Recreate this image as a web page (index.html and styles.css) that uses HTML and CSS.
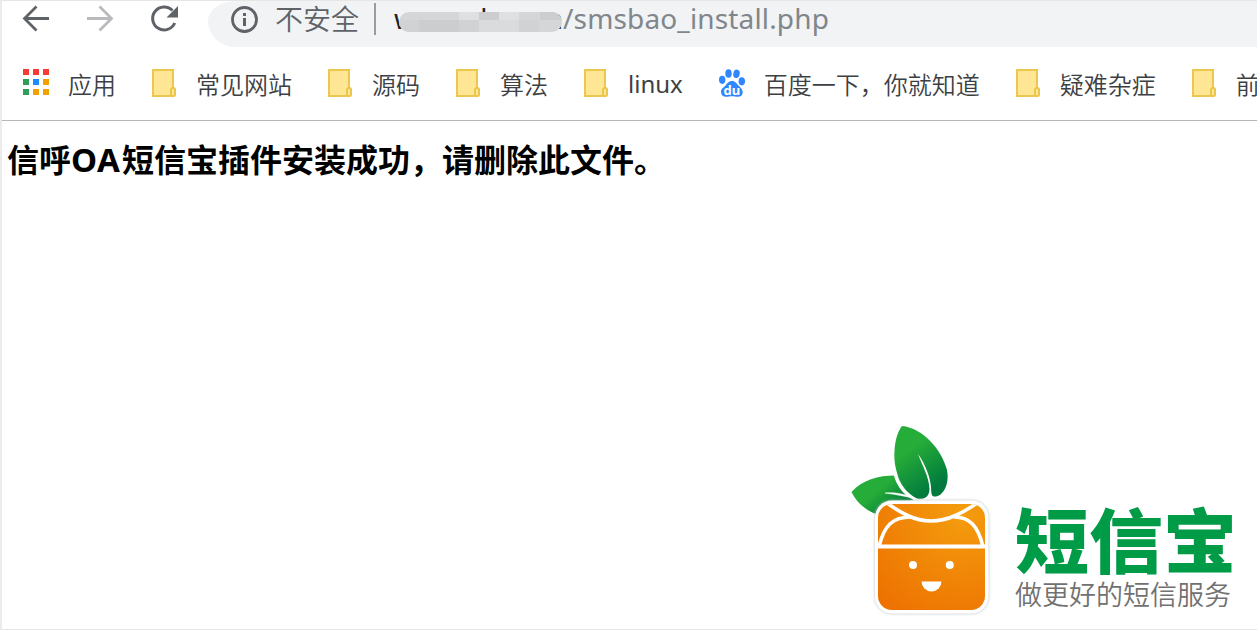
FILE: index.html
```
<!DOCTYPE html>
<html lang="zh-CN">
  <head>
    <meta charset="UTF-8" />
    <title>短信宝插件安装</title>
    <link rel="stylesheet" href="styles.css">
  </head>
  <body>
    <svg class="defs" width="0" height="0">
      <symbol id="folder" viewBox="0 0 24 28">
        <path d="M1 1h20v26H1z" fill="#ffe694" stroke="#ebc84b" stroke-width="2" />
        <rect x="19" y="19" width="4" height="8" rx="1.5" fill="#ffe694" stroke="#ebc84b" stroke-width="2" />
      </symbol>
    </svg>

    <div class="toolbar">
      <svg class="nav-icon" width="28" height="28" viewBox="0 0 28 28" fill="none" stroke="#5f6368" stroke-width="2.8">
        <path d="M27 13.5H3M14.5 1.5l-12 12 12 12" />
      </svg>
      <svg class="nav-icon" width="28" height="28" viewBox="0 0 28 28" fill="none" stroke="#bababc" stroke-width="2.8">
        <path d="M1 13.5h24M13.5 1.5l12 12-12 12" />
      </svg>
      <svg class="nav-icon" width="28" height="28" viewBox="0 0 28 28">
        <path d="M22.5 5.5A11.5 11.5 0 1 0 24.7 18" fill="none" stroke="#5f6368" stroke-width="3" />
        <path d="M28 1v11.5H16.5z" fill="#5f6368" />
      </svg>
      <div class="address">
        <svg class="info" width="28" height="28" viewBox="0 0 28 28">
          <circle cx="14.5" cy="14.5" r="12" fill="none" stroke="#5f6368" stroke-width="2.8" />
          <path d="M13 8h3v3h-3zM13 13h3v8h-3z" fill="#5f6368" />
        </svg>
        <span class="insecure">不安全</span>
        <span class="divider"></span>
        <div class="host">
          <span>w</span><span class="mid">l</span><span>n</span>
          <svg class="mosaic" width="163" height="20" viewBox="0 0 163 20">
            <path fill="#d5d6d8" d="M0 0h163v20H0z" />
            <path fill="#dfe0e1" d="M60 0h20v8H60zM100 0h20v8h-20z" />
            <path fill="#cccdcf" d="M80 0h20v8H80zM141 0h22v8h-22zM20 8h20v12H20zM40 8h20v12H40z" />
            <path fill="#d1d2d4" d="M0 8h20v12H0zM60 8h20v12H60zM120 8h20v12h-20z" />
            <path fill="#dadbdc" d="M100 8h20v12h-20zM80 8h20v12H80z" />
          </svg>
        </div>
        <span class="path">/smsbao_install.php</span>
      </div>
    </div>

    <div class="bookmarks">
      <div class="bookmark apps">
        <svg width="26" height="26" viewBox="0 0 26 26">
          <path fill="#f93a37" d="M0 0h6v6H0zM10 0h6v6h-6zM20 0h6v6h-6z" />
          <path fill="#2f9e58" d="M0 10h6v6H0zM0 20h6v6H0z" />
          <path fill="#1a8cff" d="M10 10h6v6h-6z" />
          <path fill="#f2a200" d="M20 10h6v6h-6zM10 20h6v6h-6zM20 20h6v6h-6z" />
        </svg>
        <span>应用</span>
      </div>
      <div class="bookmark"><svg width="24" height="28"><use href="#folder" /></svg><span>常见网站</span></div>
      <div class="bookmark"><svg width="24" height="28"><use href="#folder" /></svg><span>源码</span></div>
      <div class="bookmark"><svg width="24" height="28"><use href="#folder" /></svg><span>算法</span></div>
      <div class="bookmark"><svg width="24" height="28"><use href="#folder" /></svg><span class="latin">linux</span></div>
      <div class="bookmark baidu">
        <svg width="26" height="28" viewBox="0 0 26 28">
          <g fill="#2f86ff">
            <ellipse cx="3.2" cy="10.8" rx="3.2" ry="4.1" />
            <ellipse cx="9.5" cy="4.5" rx="3.2" ry="4.3" />
            <ellipse cx="17.5" cy="4.8" rx="3.2" ry="4.2" transform="rotate(12 17.5 4.8)" />
            <ellipse cx="22.8" cy="12.3" rx="3.2" ry="4.1" />
            <path d="M13 12c3.5 0 4.5 2.5 6.5 4.6 2.2 2.3 4.2 3.8 4.2 6.7 0 3-2 4.5-4.7 4.5-2.5 0-3.7-.5-6-.5s-3.5.5-6 .5c-3 0-5-1.8-5-5 0-3 2.5-4.3 4.5-6.4C8.5 14.3 9.5 12 13 12z" />
          </g>
          <text class="du" x="12.8" y="25.5" text-anchor="middle">du</text>
        </svg>
        <span>百度一下，你就知道</span>
      </div>
      <div class="bookmark"><svg width="24" height="28"><use href="#folder" /></svg><span>疑难杂症</span></div>
      <div class="bookmark"><svg width="24" height="28"><use href="#folder" /></svg><span>前端</span></div>
    </div>

    <main>
      <h1>信呼<span class="oa">OA</span>短信宝插件安装成功，请删除此文件。</h1>

      <div class="brand">
        <svg class="logo" width="142" height="192" viewBox="0 0 142 192">
          <defs>
            <radialGradient id="orange" cx="0.8" cy="0.1" r="1.2">
              <stop offset="0" stop-color="#f49d0e" />
              <stop offset="1" stop-color="#ed6e00" />
            </radialGradient>
            <linearGradient id="leaf" x1="0.35" y1="0.3" x2="0.65" y2="0.9">
              <stop offset="0" stop-color="#26ac38" />
              <stop offset="1" stop-color="#007a3d" />
            </linearGradient>
            <linearGradient id="leafBack" x1="0.45" y1="0.3" x2="0.9" y2="0.6">
              <stop offset="0" stop-color="#26ac38" />
              <stop offset="1" stop-color="#007a3d" />
            </linearGradient>
            <clipPath id="boxClip"><rect x="28" y="79" width="107" height="106" rx="14" /></clipPath>
          </defs>
          <g transform="translate(1 0)">
            <path d="M.5 67C12 54 29 50 47 50.5C50 59 57 69 68 75L40 77 25 89C12 84 5 76 .5 67z" fill="url(#leafBack)" />
            <path d="M34 68C45 67 54 69 70 75C57 72 46 69.5 34 68z" fill="#fff" stroke="#fff" stroke-width="0.5" />
            <path d="M44 48C47 60 54 70 67 75" fill="none" stroke="#fff" stroke-width="3.5" />
            <path d="M51 1C72 3 91 25 96 45C99 61 91 71 85 71.5C80 72 80.5 69 80 62C79 51 74 39 67 29C72 42 78 52 78.500 64C78.500 72 73 75 66 73.500C51 66 42 46 43.500 26C44 15 47 6 51 1z" fill="url(#leaf)" />
          </g>
          <rect class="box-shadow" x="25" y="75.5" width="113.5" height="113" rx="17" fill="#fff" />
          <rect x="28" y="79" width="107" height="106" rx="14" fill="url(#orange)" />
          <g clip-path="url(#boxClip)" fill="none" stroke="#fff">
            <path d="M34 76C51 88 64 96 81 96S113 88 130 76" stroke-width="3.6" />
            <path d="M29 122C34 100 43 92 61 92M133 122C128 100 119 92 104 92" stroke-width="3.6" />
            <path d="M27 121.5h110" stroke-width="4" />
          </g>
          <circle cx="63" cy="140" r="4" fill="#fff" />
          <circle cx="99.8" cy="140" r="4" fill="#fff" />
          <path d="M71.5 156.5h20a10 10 0 0 1-20 0z" fill="#fff" />
        </svg>
        <div class="brand-text">
          <div class="brand-name">短信宝</div>
          <div class="slogan">做更好的短信服务</div>
        </div>
      </div>
    </main>
  </body>
</html>
```
FILE: styles.css
```
* {
  box-sizing: border-box;
}
body {
  margin: 0;
  height: 630px;
  display: flex;
  flex-direction: column;
  overflow: hidden;
  background: #fff;
  border-top: 1px solid #e6e6e6;
  border-left: 2px solid #ebebeb;
  border-bottom: 1px solid #e6e6e6;
  font-family: "Noto Sans", "Noto Sans CJK SC", sans-serif;
  color: #3c4043;
}
svg {
  display: block;
  flex: none;
}
.defs {
  position: absolute;
}

/* Toolbar */
.toolbar {
  display: flex;
  height: 46px;
  padding-left: 20px;
  gap: 36px;
}
.nav-icon {
  margin-top: 4px;
}
.address {
  display: flex;
  flex: 1;
  height: 46px;
  margin-left: -6px;
  padding-left: 22px;
  background: #f1f3f4;
  border-radius: 28px 0 0 28px / 20px 0 0 26px;
  font-size: 28px;
  line-height: 34px;
  white-space: nowrap;
}
.info {
  margin-top: 4px;
}
.insecure {
  margin-left: 17px;
  font-family: "Noto Sans CJK SC", sans-serif;
  font-weight: 350;
  color: #5f6368;
}
.divider {
  width: 2px;
  height: 32px;
  margin: 2px 18px 0 15px;
  background: #9a9da0;
}
.host {
  position: relative;
  display: flex;
  justify-content: space-between;
  width: 169px;
  color: #202124;
}
.mid {
  margin-left: 6px;
}
.mosaic {
  position: absolute;
  left: 5px;
  top: 11px;
  border-radius: 10px;
}
.path {
  color: #80868b;
  letter-spacing: 0.15px;
}

/* Bookmarks bar */
.bookmarks {
  display: flex;
  align-items: flex-start;
  gap: 36px;
  height: 74px;
  padding: 22px 0 0 21px;
  border-bottom: 1px solid #b6b6b6;
  overflow: hidden;
  white-space: nowrap;
}
.bookmark {
  display: flex;
  gap: 20px;
  flex: none;
  font-family: "Noto Sans CJK SC", sans-serif;
  font-size: 24px;
  font-weight: 350;
  line-height: 29px;
}
.bookmark.apps,
.bookmark.baidu {
  gap: 19px;
}
.latin {
  font-family: "Noto Sans", sans-serif;
  font-weight: 400;
}
.du {
  font-family: "Noto Sans", sans-serif;
  font-size: 13px;
  font-weight: 700;
  fill: #fff;
}

/* Page */
main {
  display: flex;
  flex: 1;
  flex-direction: column;
  justify-content: space-between;
  align-items: flex-start;
}
h1 {
  margin: 16px 0 0 5px;
  font-family: "Noto Sans CJK SC", sans-serif;
  font-size: 32px;
  font-weight: 700;
  line-height: 42px;
  color: #000;
  white-space: nowrap;
}
.oa {
  display: inline-block;
  width: 51px;
  font-family: "Noto Sans", sans-serif;
  font-size: 33px;
  letter-spacing: 0.5px;
}
.brand {
  display: flex;
  align-self: flex-end;
  gap: 23px;
  margin: 0 22px 12px 0;
}
.box-shadow {
  filter: drop-shadow(0 0 1.5px #b9bfc4);
}
.brand-text {
  width: 220px;
  padding-top: 76px;
  font-family: "Noto Sans CJK SC", sans-serif;
  white-space: nowrap;
}
.brand-name {
  height: 78px;
  font-size: 74px;
  font-weight: 900;
  line-height: 78px;
  color: #009b46;
  transform: scaleY(0.95);
  transform-origin: 0 0;
}
.slogan {
  font-size: 27px;
  font-weight: 350;
  line-height: 30px;
  color: #727171;
}
```
